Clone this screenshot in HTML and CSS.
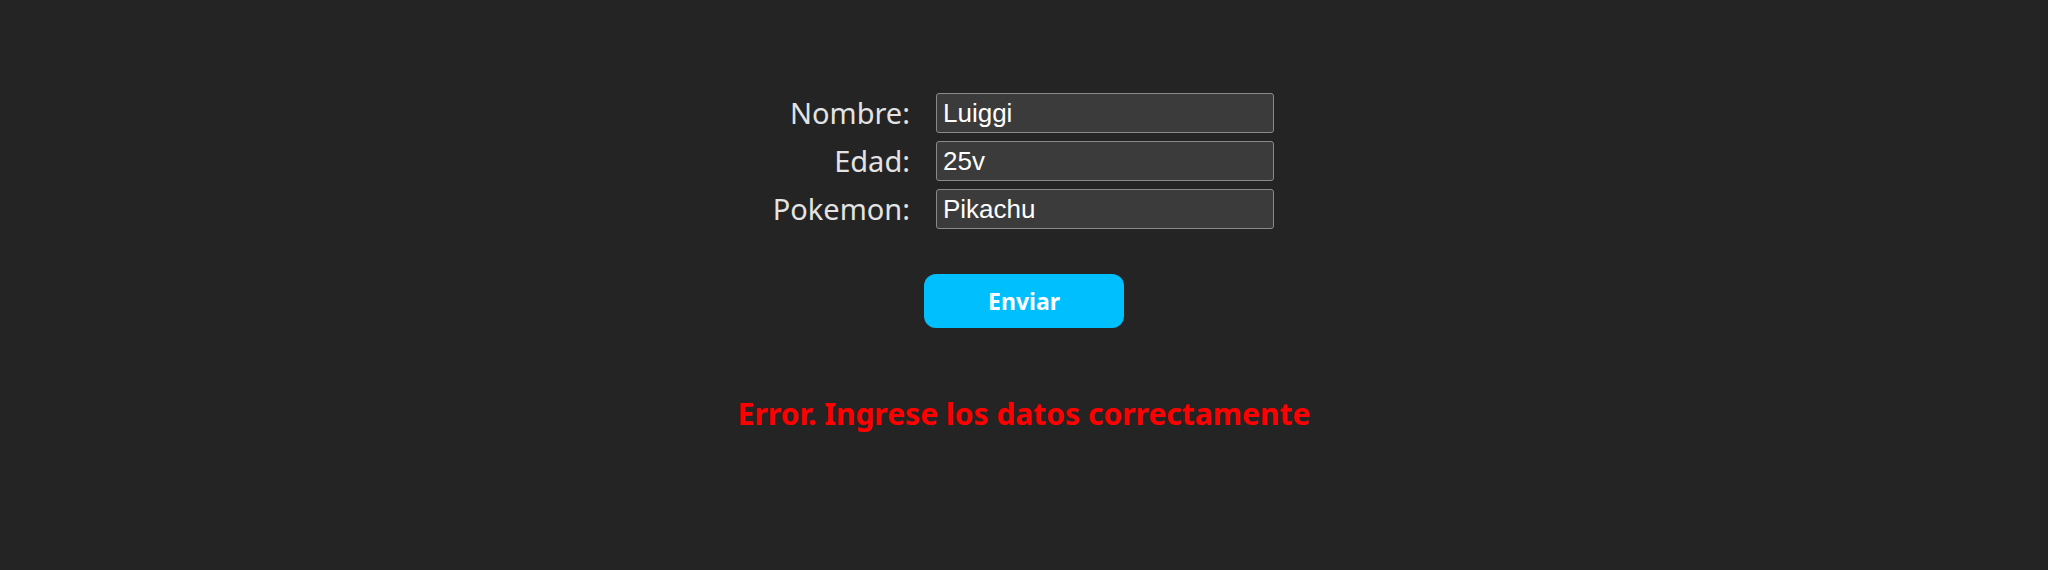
FILE: index.html
```html
<!DOCTYPE html>
<html lang="es">
<head>
<meta charset="utf-8">
<title>Formulario</title>
<link rel="stylesheet" href="styles.css">
</head>
<body>
<main class="page">
  <form class="form">
    <div class="fields">
      <label class="label" for="nombre">Nombre:</label>
      <input class="input" id="nombre" type="text" value="Luiggi">
      <label class="label" for="edad">Edad:</label>
      <input class="input" id="edad" type="text" value="25v">
      <label class="label" for="pokemon">Pokemon:</label>
      <input class="input" id="pokemon" type="text" value="Pikachu">
    </div>
    <button class="button" type="button">Enviar</button>
  </form>
  <p class="error">Error. Ingrese los datos correctamente</p>
</main>
</body>
</html>
```

FILE: styles.css
```css
html, body {
  margin: 0;
  padding: 0;
  background: #242424;
}

body {
  font-family: "Noto Sans", "Open Sans", sans-serif;
  color: #e6e6e6;
  height: 570px;
  overflow: hidden;
}

.page {
  display: flex;
  flex-direction: column;
  align-items: center;
  padding-top: 93px;
}

.form {
  display: flex;
  flex-direction: column;
  align-items: center;
}

.fields {
  display: grid;
  grid-template-columns: 136px 338px;
  column-gap: 26px;
  row-gap: 8px;
  align-items: center;
}

.label {
  justify-self: end;
  font-size: 29px;
  line-height: 40px;
  color: #e3e3e3;
  white-space: nowrap;
}

.input {
  box-sizing: border-box;
  width: 338px;
  height: 40px;
  margin: 0;
  padding: 0 6px;
  background: #3b3b3b;
  border: 1px solid #8a8a8a;
  border-radius: 3px;
  color: #ffffff;
  font-family: "Liberation Sans", Arial, sans-serif;
  font-size: 26px;
  outline: none;
}

.button {
  margin-top: 45px;
  width: 200px;
  height: 54px;
  border: none;
  border-radius: 12px;
  background: #00bfff;
  color: #ffffff;
  font-family: "Noto Sans", "Open Sans", sans-serif;
  font-weight: 700;
  font-size: 23px;
  cursor: pointer;
}

.error {
  margin: 66px 0 0 0;
  color: #ff0000;
  font-weight: 700;
  font-size: 30px;
  line-height: 40px;
}
```
